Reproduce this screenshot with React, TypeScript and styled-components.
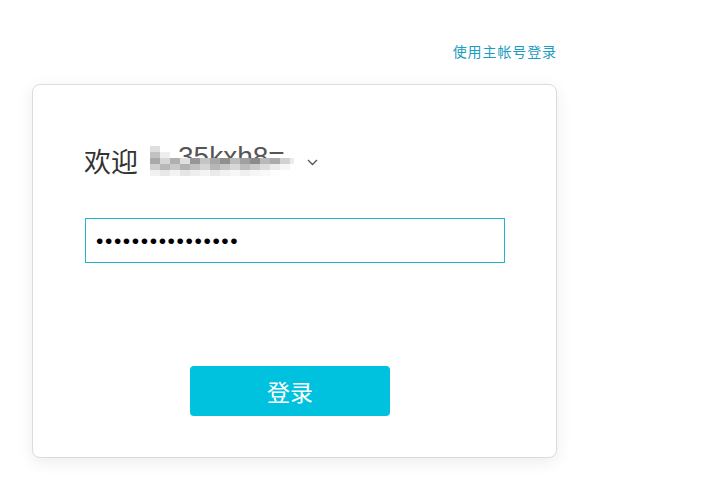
import React from "react";
import styled, { createGlobalStyle } from "styled-components";

const GlobalStyle = createGlobalStyle`
  html, body {
    margin: 0;
    padding: 0;
    background: #fff;
    font-family: "Noto Sans CJK SC", "Liberation Sans", sans-serif;
  }
`;

// shades for the pixelated user name, "" = see-through
const mosaicRows = [
  ["#dedede", "", "", "", "", "", "", "", "", "", "", "", "", "", ""],
  ["#c2c2c2", "#eeeeee", "", "", "", "", "", "", "", "", "", "", "", "", ""],
  ["#a9a9a9", "#d6d6d6", "#b0b0b0", "#e0e0e0", "#969696", "#c4c4c4", "#a8a8a8", "#8f8f8f", "#bdbdbd", "#a0a0a0", "#8c8c8c", "#b9b9b9", "#ababab", "#d2d2d2", "#ebebeb"],
  ["#cfcfcf", "#b8b8b8", "#c9c9c9", "#b2b2b2", "#c1c1c1", "#d4d4d4", "#b6b6b6", "#c6c6c6", "#d8d8d8", "#bcbcbc", "#cbcbcb", "#dcdcdc", "#ebebeb", "#f6f6f6", "#ffffff"],
  ["#f1f1f1", "#e8e8e8", "#f3f3f3", "#e6e6e6", "#eeeeee", "#f4f4f4", "#eaeaea", "#f2f2f2", "#f7f7f7", "#f0f0f0", "#f6f6f6", "#f9f9f9", "#fdfdfd", "#ffffff", "#ffffff"],
];

export default function App() {
  return (
    <>
      <GlobalStyle />
      <Page>
        <Column>
          <TopBar>
            <SwitchLink href="#">使用主帐号登录</SwitchLink>
          </TopBar>
          <Card>
            <Welcome>
              <span>欢迎</span>
              <Masked>
                <MaskedText>35kxh8=</MaskedText>
                <Mosaic>
                  {mosaicRows.map((row, r) => (
                    <MosaicRow key={r}>
                      {row.map((c, i) => (
                        <Cell key={i} $color={c} />
                      ))}
                    </MosaicRow>
                  ))}
                </Mosaic>
              </Masked>
              <Chevron width="11" height="7" viewBox="0 0 11 7">
                <path d="M1 1l4.5 4.5L10 1" fill="none" stroke="#555" strokeWidth="1.3" />
              </Chevron>
            </Welcome>
            <PasswordInput type="password" defaultValue="aaaaaaaaaaaaaaaa" />
            <ButtonRow>
              <LoginButton>登录</LoginButton>
            </ButtonRow>
          </Card>
        </Column>
      </Page>
    </>
  );
}

const Page = styled.div`
  width: 701px;
  height: 480px;
  overflow: hidden;
`;

const Column = styled.div`
  width: 525px;
  margin-left: 32px;
  padding-top: 40px;
`;

const TopBar = styled.div`
  display: flex;
  justify-content: flex-end;
  height: 24px;
`;

const SwitchLink = styled.a`
  font-size: 14px;
  line-height: 22px;
  letter-spacing: 0.9px;
  color: #1b9cc2;
  text-decoration: none;
`;

const Card = styled.div`
  margin-top: 20px;
  height: 374px;
  box-sizing: border-box;
  border: 1px solid #dcdcdc;
  border-radius: 8px;
  background: #fff;
  box-shadow: 0 4px 16px rgba(0, 0, 0, 0.08);
  padding: 59px 50px 0 52px;
`;

const Welcome = styled.div`
  display: flex;
  align-items: center;
  height: 32px;
  margin-left: -1px;
  font-size: 27px;
  color: #333;
`;

const Masked = styled.span`
  position: relative;
  display: inline-block;
  width: 148px;
  height: 32px;
  margin-left: 8px;
  overflow: hidden;
`;

const MaskedText = styled.span`
  position: absolute;
  left: 32px;
  top: -1px;
  font-family: "Liberation Sans", sans-serif;
  font-size: 28px;
  line-height: 28px;
  color: #555;
  white-space: nowrap;
`;

const Mosaic = styled.div`
  position: absolute;
  left: 4px;
  top: 2px;
  display: flex;
  flex-direction: column;
`;

const MosaicRow = styled.div`
  display: flex;
`;

const Cell = styled.span<{ $color: string }>`
  width: 10px;
  height: 6px;
  background: ${(p) => p.$color || "transparent"};
`;

const Chevron = styled.svg`
  margin-left: 13px;
  margin-top: 5px;
`;

const PasswordInput = styled.input`
  display: block;
  margin-top: 42px;
  width: 420px;
  height: 45px;
  box-sizing: border-box;
  border: 1px solid #20b5cb;
  outline: none;
  padding: 0 0 0 10px;
  font-family: "Liberation Sans", sans-serif;
  font-size: 21px;
  letter-spacing: 1.6px;
  color: #000;
`;

const ButtonRow = styled.div`
  display: flex;
  margin-top: 103px;
  padding-left: 105px;
`;

const LoginButton = styled.button`
  width: 200px;
  height: 50px;
  border: none;
  border-radius: 4px;
  background: #00c1de;
  color: #fff;
  font-family: "Noto Sans CJK SC", sans-serif;
  font-size: 23px;
  cursor: pointer;
`;
